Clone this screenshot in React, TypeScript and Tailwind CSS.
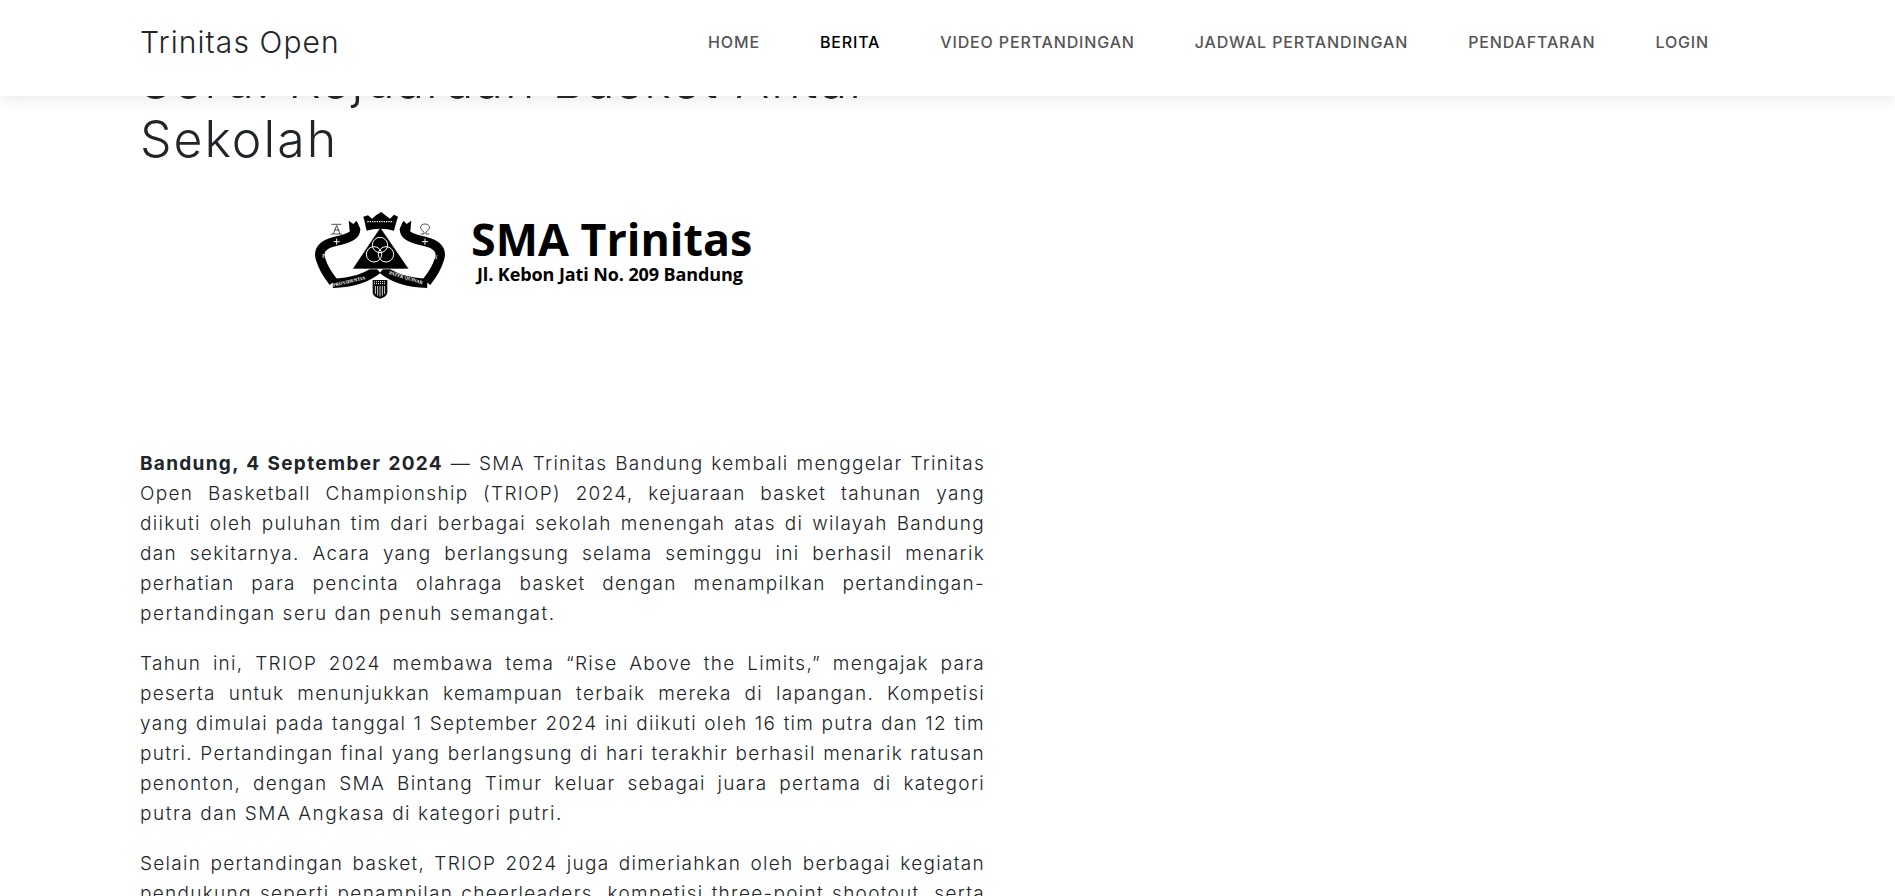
const font = "font-['Inter',sans-serif]";

const navItems = ["HOME", "BERITA", "VIDEO PERTANDINGAN", "JADWAL PERTANDINGAN", "PENDAFTARAN", "LOGIN"];

const lineClass = "block text-justify [text-align-last:justify]";

const firstParagraph = [
  "Open Basketball Championship (TRIOP) 2024, kejuaraan basket tahunan yang",
  "diikuti oleh puluhan tim dari berbagai sekolah menengah atas di wilayah Bandung",
  "dan sekitarnya. Acara yang berlangsung selama seminggu ini berhasil menarik",
  "perhatian para pencinta olahraga basket dengan menampilkan pertandingan-",
];

const secondParagraph = [
  "Tahun ini, TRIOP 2024 membawa tema “Rise Above the Limits,” mengajak para",
  "peserta untuk menunjukkan kemampuan terbaik mereka di lapangan. Kompetisi",
  "yang dimulai pada tanggal 1 September 2024 ini diikuti oleh 16 tim putra dan 12 tim",
  "putri. Pertandingan final yang berlangsung di hari terakhir berhasil menarik ratusan",
  "penonton, dengan SMA Bintang Timur keluar sebagai juara pertama di kategori",
];

const thirdParagraph = [
  "Selain pertandingan basket, TRIOP 2024 juga dimeriahkan oleh berbagai kegiatan",
  "pendukung seperti penampilan cheerleaders, kompetisi three-point shootout, serta",
];

function Crest() {
  return (
    <svg viewBox="0 0 480 330" className="w-[160px] h-[110px] shrink-0">
      {/* ribbons */}
      <g fill="none" stroke="#000" strokeWidth="28">
        <path d="M158 76 C182 100 150 116 106 124 C70 132 52 150 62 178 C68 200 84 226 100 246" />
        <path d="M322 76 C298 100 330 116 374 124 C410 132 428 150 418 178 C412 200 396 226 380 246" />
        <path d="M98 250 C150 248 196 238 232 208" />
        <path d="M382 250 C330 248 284 238 248 208" />
      </g>
      <path d="M146 62 L160 72 L170 62 L182 90 L150 100 Z" fill="#000" />
      <path d="M334 62 L320 72 L310 62 L298 90 L330 100 Z" fill="#000" />
      {/* triangle and crown */}
      <path d="M241 82 L327 207 L157 207 Z" fill="#000" stroke="#fff" strokeWidth="2" />
      <path d="M200 92 C196 76 194 62 190 50 L204 46 L216 56 L230 44 L244 36 L256 46 L270 56 L282 44 L294 50 C290 62 286 76 282 92 C258 84 224 84 200 92 Z" fill="#000" />
      <path d="M202 65 H280" stroke="#fff" strokeWidth="4" strokeDasharray="4 3" />
      <circle cx="240" cy="135" r="23" fill="none" stroke="#fff" strokeWidth="3" />
      <circle cx="222" cy="163" r="23" fill="none" stroke="#fff" strokeWidth="3" />
      <circle cx="258" cy="163" r="23" fill="none" stroke="#fff" strokeWidth="3" />
      {/* ribbon lettering */}
      <g fill="#fff" fontFamily="'Liberation Serif',serif" fontWeight="700" fontSize="15">
        <text x="64" y="172" transform="rotate(12 64 172)">TUA</text>
        <text x="384" y="182" transform="rotate(-12 384 182)">NAT</text>
        <text x="100" y="260" fontSize="14" transform="rotate(-13 100 260)">PROVIDENTIA</text>
        <text x="266" y="222" fontSize="14" transform="rotate(17 266 222)">PATER QUINAR</text>
      </g>
      {/* shield */}
      <path d="M218 240 H262 V276 C262 288 250 293 240 296 C230 293 218 288 218 276 Z" fill="#000" />
      <path d="M222 245 H258 M222 251 H258" stroke="#fff" strokeWidth="3" strokeDasharray="3 3" />
      <path d="M226 258 V282 M233 258 V287 M240 258 V290 M247 258 V287 M254 258 V282" stroke="#fff" strokeWidth="2.5" />
      {/* alpha and omega */}
      <g fill="none" stroke="#333" strokeWidth="2.5">
        <path d="M94 73 H124 M92 102 H126 M100 102 L110 76 L120 102 M102 90 H118" />
        <path d="M362 102 H372 V96 C356 86 360 72 375 72 C390 72 394 86 378 96 V102 H388" />
      </g>
      <path d="M110 116 V134 M101 125 H119 M375 116 V134 M366 125 H384" stroke="#fff" strokeWidth="3" />
    </svg>
  );
}

export default function App() {
  return (
    <div className={`relative h-[896px] overflow-hidden bg-white ${font}`}>
      <header className="absolute inset-x-0 top-0 z-10 h-24 bg-white shadow-[0_2px_15px_rgba(0,0,0,0.1)]">
        <div className="flex items-center justify-between pl-[140px] pr-[186px] pt-[20px]">
          <span className="text-[30px] font-light leading-[44px] tracking-[1.1px] text-[#212529]">Trinitas Open</span>
          <nav className="flex gap-[60px]">
            {navItems.map((item) => (
              <a key={item} className={`text-[16px] font-medium tracking-[0.85px] ${item === "BERITA" ? "text-black" : "text-[#555]"}`}>
                {item}
              </a>
            ))}
          </nav>
        </div>
      </header>

      <main className="w-[845px] ml-[140px] pt-[51px] text-[#212529]">
        <h1 className="text-[50px] font-light leading-[59px] tracking-[2px]">Seru! Kejuaraan Basket Antar Sekolah</h1>
        <div className="mt-[31px] ml-[160px] flex items-center gap-[11px]">
          <Crest />
          <div className="font-['Open_Sans',sans-serif] text-black font-bold -mt-[10px]">
            <div className="text-[44.8px] leading-[48px]">SMA Trinitas</div>
            <div className="text-[18px] leading-[22px] pl-[6px] tracking-[-0.1px]">Jl. Kebon Jati No. 209 Bandung</div>
          </div>
        </div>
        <div className="mt-[139px] text-[19px] font-light leading-[30px] tracking-[1.3px] space-y-5">
          <p>
            <span className={lineClass}>
              <strong className="font-bold tracking-[1.3px]">Bandung, 4 September 2024</strong> — SMA Trinitas Bandung kembali menggelar Trinitas
            </span>
            {firstParagraph.map((line) => <span key={line} className={lineClass}>{line}</span>)}
            <span className="block tracking-[1.55px]">pertandingan seru dan penuh semangat.</span>
          </p>
          <p>
            {secondParagraph.map((line) => <span key={line} className={lineClass}>{line}</span>)}
            <span className="block tracking-[1.55px]">putra dan SMA Angkasa di kategori putri.</span>
          </p>
          <p>
            {thirdParagraph.map((line) => <span key={line} className={lineClass}>{line}</span>)}
          </p>
        </div>
      </main>
    </div>
  );
}
